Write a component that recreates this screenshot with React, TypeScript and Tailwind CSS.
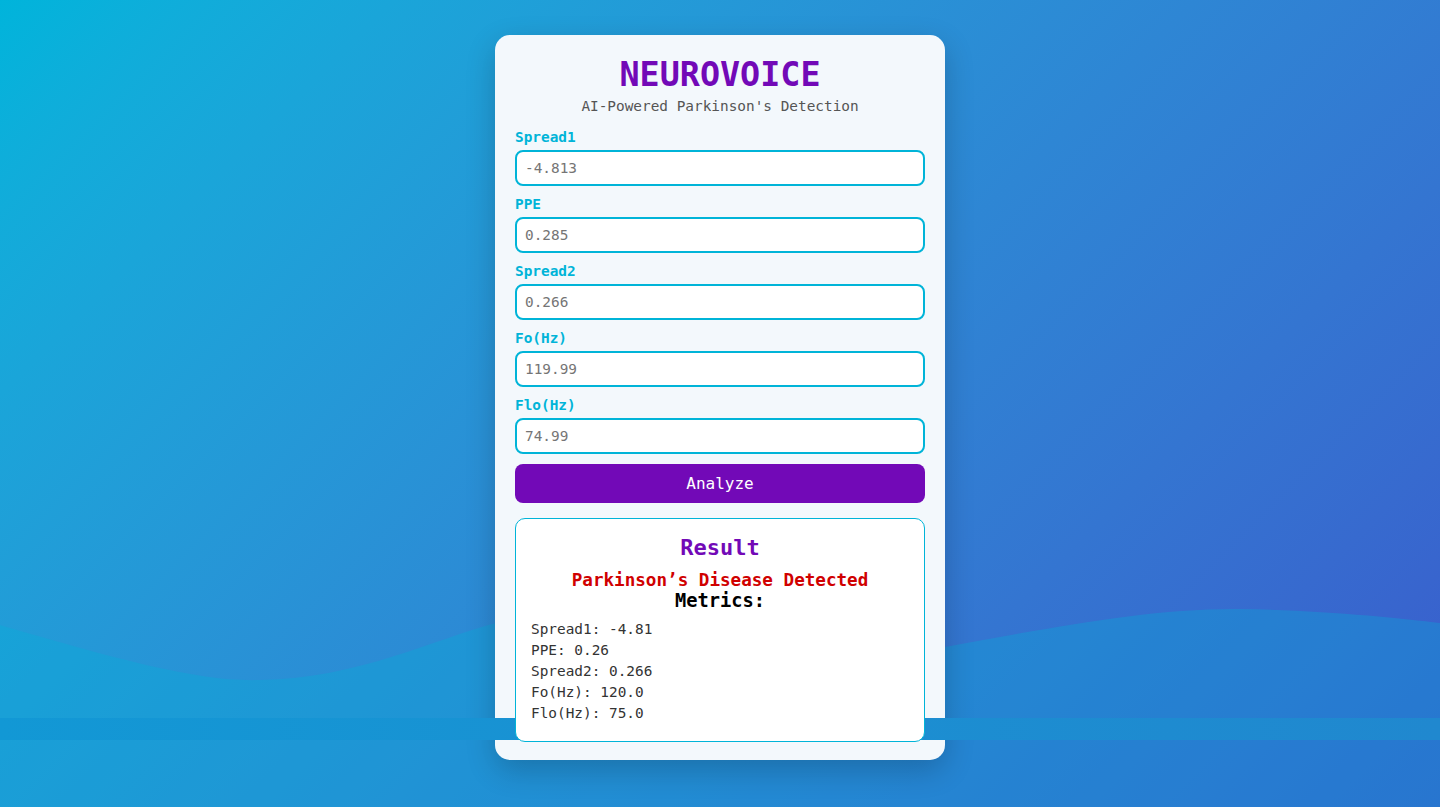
import React from "react";

const fields = [
  { label: "Spread1", placeholder: "-4.813" },
  { label: "PPE", placeholder: "0.285" },
  { label: "Spread2", placeholder: "0.266" },
  { label: "Fo(Hz)", placeholder: "119.99" },
  { label: "Flo(Hz)", placeholder: "74.99" },
];

const metrics = [
  "Spread1: -4.81",
  "PPE: 0.26",
  "Spread2: 0.266",
  "Fo(Hz): 120.0",
  "Flo(Hz): 75.0",
];

const Field = ({ label, placeholder }: { label: string; placeholder: string }) => (
  <div className="flex flex-col">
    <label className="text-[14.4px] leading-[20px] font-bold text-[#00b4d8]">{label}</label>
    <input
      type="text"
      placeholder={placeholder}
      className="mt-[3px] h-[36px] w-full rounded-[8px] border-2 border-[#00b4d8] bg-white px-2 text-[14.4px] text-[#333] outline-none placeholder:text-[#757575]"
    />
  </div>
);

export default function App() {
  return (
    <div className="relative min-h-screen w-full overflow-hidden bg-linear-135 from-[#00b4db] to-[#3a5bcc] font-['DejaVu_Sans_Mono',monospace]">
      {/* wave behind the card */}
      <svg
        className="absolute inset-0 h-full w-full"
        viewBox="0 0 1440 807"
        preserveAspectRatio="none"
      >
        <path
          d="M0,625 C120,660 200,682 260,680 C360,678 430,640 500,622 C560,607 650,595 720,600 C800,605 880,640 945,647 C1050,628 1150,608 1240,609 C1320,610 1400,618 1440,623 L1440,807 L0,807 Z"
          fill="rgba(0,180,216,0.3)"
        />
      </svg>

      {/* band over the card */}
      <div className="absolute left-0 right-0 top-[718px] z-10 h-[22px] bg-linear-to-r from-[#1298d5] to-[#2088cf]" />

      <div className="flex justify-center pt-[35px]">
        <div className="relative w-[450px] rounded-[15px] bg-[#f3f8fc] px-5 pt-[20px] pb-[18px] shadow-[0_10px_30px_rgba(0,0,0,0.2)]">
          <h1 className="text-center text-[33.4px] leading-[40px] font-bold text-[#7209b7]">NEUROVOICE</h1>
          <p className="mt-[1px] text-center text-[14.4px] leading-[20px] text-[#555]">
            AI-Powered Parkinson's Detection
          </p>

          <div className="mt-[11px] flex flex-col gap-[8px]">
            {fields.map((f) => (
              <Field key={f.label} {...f} />
            ))}
          </div>

          <button className="mt-[10px] h-[39px] w-full rounded-[8px] bg-[#7209b7] text-[16px] text-white">
            Analyze
          </button>

          <div className="relative z-20 mt-[15px] h-[224px] rounded-[10px] border border-[#00b4d8] bg-white px-[15px] pt-[15px]">
            <h2 className="text-center text-[22px] leading-[28px] font-bold text-[#7209b7]">Result</h2>
            <p className="mt-[8px] text-center text-[17.6px] leading-[20px] font-bold text-[#d00000]">
              Parkinson’s Disease Detected
            </p>
            <h3 className="text-center text-[18.7px] leading-[22px] font-bold text-black">Metrics:</h3>
            <div className="mt-[7px] flex flex-col">
              {metrics.map((m) => (
                <p key={m} className="text-[14.4px] leading-[21px] text-[#333]">
                  {m}
                </p>
              ))}
            </div>
          </div>
        </div>
      </div>
    </div>
  );
}
